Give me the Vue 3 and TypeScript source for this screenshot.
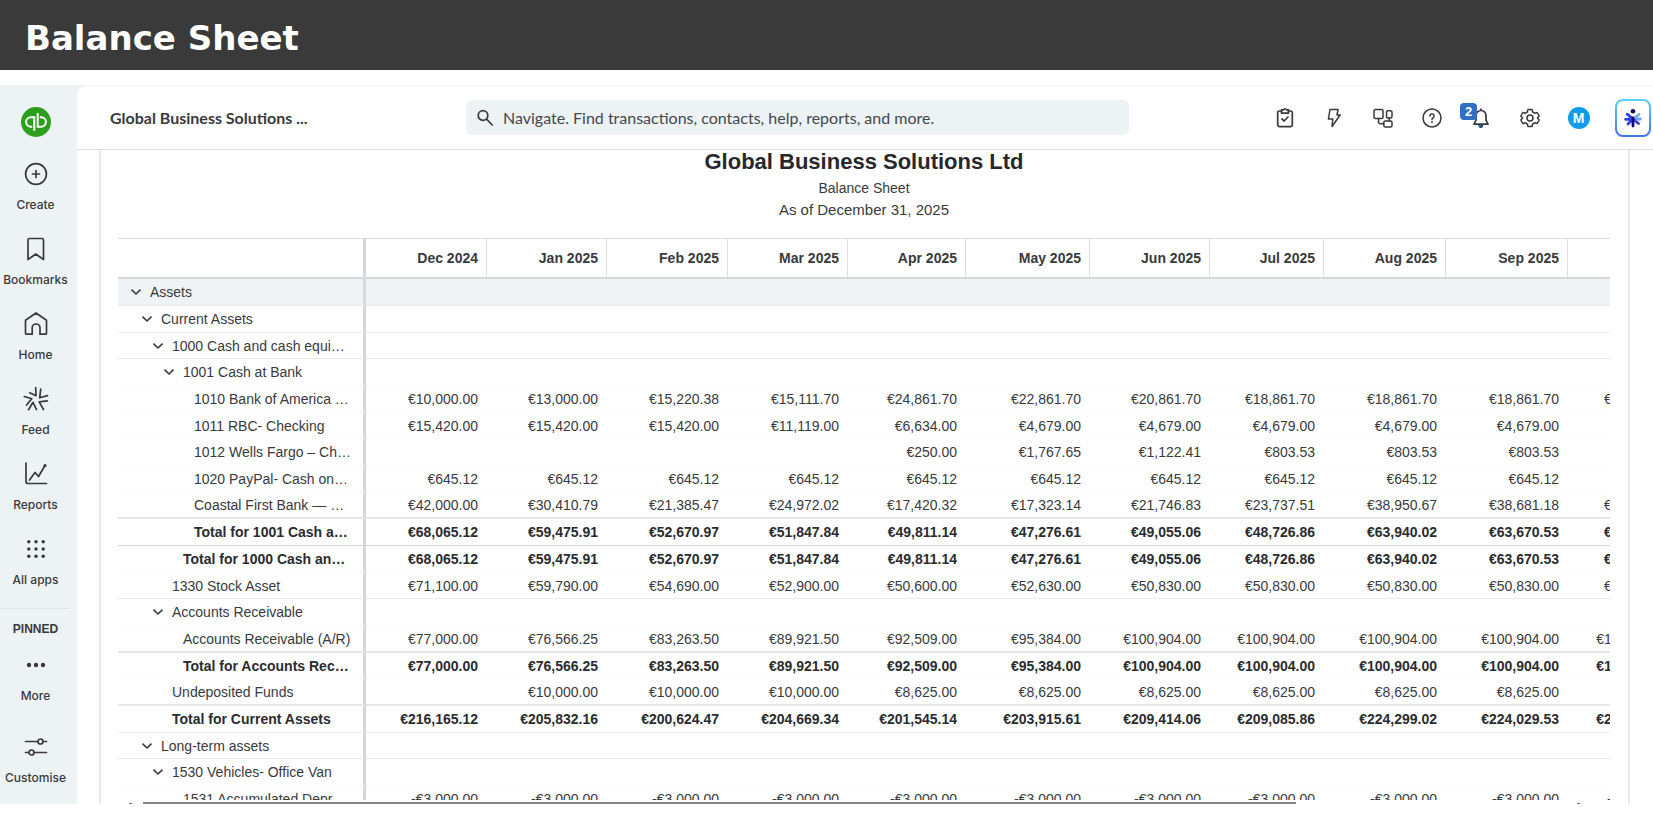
<script setup lang="ts">
import { ref } from 'vue'

type Kind = 'group' | 'leaf' | 'total'

interface Row {
  name: string
  level: number
  kind: Kind
  line: 'faint' | 'light' | 'medium' | 'strong'
  values: string[]
}

interface NavItem {
  id: string
  label: string
}

const query = ref('')

const navItems: NavItem[] = [
  { id: 'create', label: 'Create' },
  { id: 'bookmarks', label: 'Bookmarks' },
  { id: 'home', label: 'Home' },
  { id: 'feed', label: 'Feed' },
  { id: 'reports', label: 'Reports' },
  { id: 'apps', label: 'All apps' },
]

const months = [
  'Dec 2024', 'Jan 2025', 'Feb 2025', 'Mar 2025', 'Apr 2025', 'May 2025',
  'Jun 2025', 'Jul 2025', 'Aug 2025', 'Sep 2025',
]

const same = (value: string): string[] => [...months.map(() => value), value]
const blank = same('')

const cashTotals = [
  '€68,065.12', '€59,475.91', '€52,670.97', '€51,847.84', '€49,811.14', '€47,276.61',
  '€49,055.06', '€48,726.86', '€63,940.02', '€63,670.53', '€63,670.53',
]

const receivables = [
  '€77,000.00', '€76,566.25', '€83,263.50', '€89,921.50', '€92,509.00', '€95,384.00',
  '€100,904.00', '€100,904.00', '€100,904.00', '€100,904.00', '€100,904.00',
]

const rows: Row[] = [
  { name: 'Assets', level: 0, kind: 'group', line: 'light', values: blank },
  { name: 'Current Assets', level: 1, kind: 'group', line: 'light', values: blank },
  { name: '1000 Cash and cash equi…', level: 2, kind: 'group', line: 'light', values: blank },
  { name: '1001 Cash at Bank', level: 3, kind: 'group', line: 'faint', values: blank },
  {
    name: '1010 Bank of America …', level: 4, kind: 'leaf', line: 'faint',
    values: ['€10,000.00', '€13,000.00', '€15,220.38', '€15,111.70', '€24,861.70', '€22,861.70', '€20,861.70', '€18,861.70', '€18,861.70', '€18,861.70', '€18,861.70'],
  },
  {
    name: '1011 RBC- Checking', level: 4, kind: 'leaf', line: 'faint',
    values: ['€15,420.00', '€15,420.00', '€15,420.00', '€11,119.00', '€6,634.00', '€4,679.00', '€4,679.00', '€4,679.00', '€4,679.00', '€4,679.00', ''],
  },
  {
    name: '1012 Wells Fargo – Ch…', level: 4, kind: 'leaf', line: 'faint',
    values: ['', '', '', '', '€250.00', '€1,767.65', '€1,122.41', '€803.53', '€803.53', '€803.53', ''],
  },
  {
    name: '1020 PayPal- Cash on…', level: 4, kind: 'leaf', line: 'faint',
    values: [...months.map(() => '€645.12'), ''],
  },
  {
    name: 'Coastal First Bank — …', level: 4, kind: 'leaf', line: 'medium',
    values: ['€42,000.00', '€30,410.79', '€21,385.47', '€24,972.02', '€17,420.32', '€17,323.14', '€21,746.83', '€23,737.51', '€38,950.67', '€38,681.18', '€38,681.18'],
  },
  { name: 'Total for 1001 Cash a…', level: 4, kind: 'total', line: 'strong', values: cashTotals },
  { name: 'Total for 1000 Cash an…', level: 3, kind: 'total', line: 'faint', values: cashTotals },
  {
    name: '1330 Stock Asset', level: 2, kind: 'leaf', line: 'light',
    values: ['€71,100.00', '€59,790.00', '€54,690.00', '€52,900.00', '€50,600.00', '€52,630.00', '€50,830.00', '€50,830.00', '€50,830.00', '€50,830.00', '€50,830.00'],
  },
  { name: 'Accounts Receivable', level: 2, kind: 'group', line: 'faint', values: blank },
  { name: 'Accounts Receivable (A/R)', level: 3, kind: 'leaf', line: 'medium', values: receivables },
  { name: 'Total for Accounts Rec…', level: 3, kind: 'total', line: 'faint', values: receivables },
  {
    name: 'Undeposited Funds', level: 2, kind: 'leaf', line: 'medium',
    values: ['', '€10,000.00', '€10,000.00', '€10,000.00', '€8,625.00', '€8,625.00', '€8,625.00', '€8,625.00', '€8,625.00', '€8,625.00', ''],
  },
  {
    name: 'Total for Current Assets', level: 2, kind: 'total', line: 'light',
    values: ['€216,165.12', '€205,832.16', '€200,624.47', '€204,669.34', '€201,545.14', '€203,915.61', '€209,414.06', '€209,085.86', '€224,299.02', '€224,029.53', '€224,029.53'],
  },
  { name: 'Long-term assets', level: 1, kind: 'group', line: 'light', values: blank },
  { name: '1530 Vehicles- Office Van', level: 2, kind: 'group', line: 'faint', values: blank },
  { name: '1531 Accumulated Depr…', level: 3, kind: 'leaf', line: 'faint', values: same('-€3,000.00') },
]
</script>

<template>
  <div class="page">
    <header class="banner">
      <h1>Balance Sheet</h1>
    </header>

    <div class="app">
      <nav class="sidebar" aria-label="Main">
        <a class="logo" href="#" aria-label="QuickBooks">
          <svg viewBox="0 0 30 30" width="30" height="30">
            <circle cx="15" cy="15" r="15" fill="#2ca01c" />
            <g fill="none" stroke="#fff" stroke-width="2">
              <path d="M13.300 24V10.300H9.800a4.700 4.700 0 0 0 0 9.400h1.400" />
              <path d="M16.700 6v13.700h3.500a4.700 4.700 0 0 0 0-9.400h-1.400" />
            </g>
          </svg>
        </a>

        <ul class="nav-list">
          <li v-for="item in navItems" :key="item.id">
            <a class="nav-item" href="#">
              <svg class="icon" viewBox="0 0 28 28" width="28" height="28">
                <template v-if="item.id === 'create'">
                  <circle cx="14" cy="14" r="10.400" />
                  <path d="M14 10.500v7M10.500 14h7" />
                </template>
                <path v-else-if="item.id === 'bookmarks'" d="M7 3.500h13a1.500 1.500 0 0 1 1.500 1.500v19.500L13.800 19l-7.800 5.500V5A1.500 1.500 0 0 1 7.500 3.500Z" />
                <path v-else-if="item.id === 'home'" d="M3.500 10.200 14 3l10.500 7.200v13a1 1 0 0 1-1 1H18v-6.300a3.900 3.900 0 0 0-7.800 0v6.300H4.500a1 1 0 0 1-1-1Z" />
                <path v-else-if="item.id === 'feed'" d="M13.700 2.500 14 10.700 7.700 7.800M18.700 4.200 17.700 12.800 25.500 10.600M2.300 11.500 9.800 13.700 4.500 20M6.500 24.700 11 17.300 14.500 24.500M25.300 15.800 17.200 16.800 21.500 24.500" />
                <template v-else-if="item.id === 'reports'">
                  <path d="M4 3v18.500a2 2 0 0 0 2 2h18.500" />
                  <path d="M7.500 20 13 12.500l3.500 4L23 5.500" />
                  <circle class="solid" cx="23" cy="5.500" r="1.600" />
                </template>
                <g v-else class="solid">
                  <template v-for="y in 3" :key="y">
                    <circle v-for="x in 3" :key="x" :cx="x * 7.2 - 0.4" :cy="y * 7.2 - 0.4" r="1.700" />
                  </template>
                </g>
              </svg>
              <span>{{ item.label }}</span>
            </a>
          </li>
        </ul>

        <div class="pinned">
          <h2>PINNED</h2>
          <button type="button" class="nav-item">
            <svg class="icon" viewBox="0 0 28 28" width="28" height="28">
              <g class="solid">
                <circle cx="7" cy="14" r="2.200" />
                <circle cx="14" cy="14" r="2.200" />
                <circle cx="21" cy="14" r="2.200" />
              </g>
            </svg>
            <span>More</span>
          </button>
          <button type="button" class="nav-item">
            <svg class="icon" viewBox="0 0 28 28" width="28" height="28">
              <path d="M3.500 8.500h12M21.500 8.500h3M3.500 19.500h3M12.500 19.500h12" />
              <circle cx="18.500" cy="8.500" r="2.500" />
              <circle cx="9.500" cy="19.500" r="2.500" />
            </svg>
            <span>Customise</span>
          </button>
        </div>
      </nav>

      <main class="main">
        <div class="topbar">
          <button type="button" class="company">Global Business Solutions ...</button>
          <label class="search">
            <svg class="icon" viewBox="0 0 18 18" width="18" height="18">
              <circle cx="7" cy="6.500" r="4.800" />
              <path d="m10.600 10.200 5.600 5.800" />
            </svg>
            <input v-model="query" type="text" aria-label="Search" placeholder="Navigate. Find transactions, contacts, help, reports, and more.">
          </label>
          <div class="tools">
            <button type="button" class="tool" aria-label="Tasks">
              <svg class="icon" viewBox="0 0 24 24" width="24" height="24">
                <path d="M8.500 5h-2A1.800 1.800 0 0 0 4.700 6.800v12a1.800 1.800 0 0 0 1.800 1.800h11a1.800 1.800 0 0 0 1.800-1.800v-12A1.800 1.800 0 0 0 17.500 5h-2" />
                <path d="M8.500 3.800h2a1.600 1.600 0 0 1 3 0h2v3.400h-7ZM9 13l2.200 2 3.800-4" />
              </svg>
            </button>
            <button type="button" class="tool" aria-label="Quick actions">
              <svg class="icon thin" viewBox="0 0 24 24" width="24" height="24">
                <path d="M8 3.500h8L15 9h3.200L10 20.500l.8-7.500H6.400Z" />
              </svg>
            </button>
            <button type="button" class="tool" aria-label="Workflows">
              <svg class="icon thin" viewBox="0 0 24 24" width="24" height="24">
                <rect x="3" y="3.500" width="9" height="9" rx="1.500" />
                <rect x="15.500" y="4.800" width="5.500" height="7.200" rx="1.500" />
                <rect x="12.800" y="15" width="8.200" height="6" rx="1.500" />
                <path d="M7.500 12.500V16A1.800 1.800 0 0 0 9.300 17.800h3.500M18.200 12v3" />
              </svg>
            </button>
            <button type="button" class="tool" aria-label="Help">
              <svg class="icon thin" viewBox="0 0 24 24" width="24" height="24">
                <circle cx="12" cy="12" r="9" />
                <path d="M9.900 10a2.100 2.100 0 1 1 3.200 1.800c-.8.500-1.100.9-1.100 1.700M12 15.600v.8" />
              </svg>
            </button>
            <button type="button" class="tool" aria-label="Notifications">
              <svg class="icon" viewBox="0 0 24 24" width="24" height="24">
                <path d="M12 3v1.500M12 4.500a5 5 0 0 0-5 5v4.700l-2 4h14l-2-4V9.500a5 5 0 0 0-5-5Z" />
                <path class="clapper" d="M10 19.500h4l-1 2h-2Z" />
              </svg>
              <span class="badge">2</span>
            </button>
            <button type="button" class="tool" aria-label="Settings">
              <svg class="icon thin" viewBox="0 0 24 24" width="24" height="24">
                <path d="M10 3.500h4l.7 2.500 2 1.200 2.500-.7 2 3.500-1.800 2 1.800 2-2 3.500-2.500-.7-2 1.200-.7 2.500h-4l-.7-2.500-2-1.200-2.500.7-2-3.500 1.800-2-1.800-2 2-3.500 2.500.7 2-1.200Z" />
                <circle cx="12" cy="12" r="3" />
              </svg>
            </button>
            <button type="button" class="tool" aria-label="Account">
              <span class="avatar">M</span>
            </button>
            <button type="button" class="assistant" aria-label="Assistant">
              <svg viewBox="0 0 20 20" width="20" height="20">
                <g fill="none" stroke-width="2.800" stroke-linecap="round">
                  <path d="m10 11 6-4.500M10 11h7.500" stroke="#7ba6f8" />
                  <path d="m4.200 6.200 5.800 4.800-7.500.3M10 11l-5 5M10 11l5.500 4.500" stroke="#2c43e4" />
                  <path d="M10 10v8" stroke="#140a78" />
                </g>
                <circle cx="10" cy="3.200" r="2.300" fill="#140a60" />
              </svg>
            </button>
          </div>
        </div>

        <section class="report">
          <div class="heading">
            <h2>Global Business Solutions Ltd</h2>
            <p>Balance Sheet</p>
            <p class="date">As of December 31, 2025</p>
          </div>

          <div class="viewport">
            <table>
              <colgroup>
                <col class="c-name">
                <col v-for="n in 11" :key="n" :class="'c-' + n">
              </colgroup>
              <thead>
                <tr>
                  <td class="name" />
                  <th v-for="month in months" :key="month" scope="col">{{ month }}</th>
                  <td />
                </tr>
              </thead>
              <tbody>
                <tr v-for="row in rows" :key="row.name" :class="[row.kind, 'line-' + row.line, 'level-' + row.level]">
                  <th class="name" scope="row">
                    <div class="label">
                      <button v-if="row.kind === 'group'" type="button" aria-expanded="true" :aria-label="'Collapse ' + row.name">
                        <svg viewBox="0 0 14 14" width="14" height="14">
                          <path d="m2.500 4.700 4.500 4.300 4.500-4.300" />
                        </svg>
                      </button>
                      <span>{{ row.name }}</span>
                    </div>
                  </th>
                  <td v-for="(value, i) in row.values" :key="i">{{ value }}</td>
                </tr>
              </tbody>
            </table>
          </div>
          <div class="scrollbar"><span class="arrow" /><div class="track"><div class="thumb" /></div><span class="arrow" /></div>
        </section>
      </main>
    </div>
  </div>
</template>

<style>
body {
  margin: 0;
  background: #fff;
}
</style>

<style scoped>
* {
  box-sizing: border-box;
}

h1,
h2,
p,
ul {
  margin: 0;
  padding: 0;
}

button {
  padding: 0;
  border: 0;
  background: none;
  color: inherit;
  font: inherit;
}

a {
  color: inherit;
  text-decoration: none;
}

svg {
  display: block;
}

.page {
  display: flex;
  flex-direction: column;
  height: 100vh;
  padding-bottom: 15px;
  color: #393a3d;
  font-family: "Liberation Sans", Arial, sans-serif;
  font-size: 14px;
}

.banner {
  display: flex;
  flex: none;
  align-items: center;
  height: 70px;
  margin-bottom: 15px;
  padding: 5px 25px 0;
  background: #3a3a3a;
}

.banner h1 {
  color: #fff;
  font: bold 34px/40px "DejaVu Sans", sans-serif;
}

.app {
  display: flex;
  flex: 1;
  min-height: 0;
  background: #edf2f5;
}

.icon {
  fill: none;
  stroke: #393a3d;
  stroke-width: 1.700;
  stroke-linecap: round;
  stroke-linejoin: round;
}

.icon.thin {
  stroke-width: 1.500;
}

.icon .solid {
  fill: #393a3d;
  stroke: none;
}

.sidebar {
  flex: none;
  width: 77px;
  padding: 22px 6px 0 0;
  font: 500 12px/16px Inter, sans-serif;
}

.logo {
  display: block;
  width: 30px;
  margin: 0 auto 23px;
}

.nav-list {
  display: grid;
  gap: 22px;
  list-style: none;
}

.nav-item {
  display: grid;
  gap: 9px;
  justify-items: center;
  width: 100%;
}

.pinned {
  margin-top: 20px;
  border-top: 1px solid #e0e5e8;
}

.pinned h2 {
  margin: 12px 0 14px;
  font: bold 12px/16px "Liberation Sans", Arial, sans-serif;
  text-align: center;
}

.pinned .nav-item + .nav-item {
  margin-top: 29px;
}

.main {
  display: flex;
  flex: 1;
  flex-direction: column;
  min-width: 0;
  border-top: 1px solid #f3f5f6;
  border-radius: 10px 0 0 0;
  background: #fff;
}

.topbar {
  display: flex;
  flex: none;
  align-items: center;
  height: 64px;
  padding: 0 2px 0 33px;
  border-bottom: 1px solid #dcdfe2;
}

.company {
  flex: 0 0 356px;
  font: bold 16px/20px Lato, sans-serif;
  text-align: left;
}

.search {
  display: flex;
  flex: 0 1 43%;
  align-items: center;
  gap: 9px;
  height: 35px;
  padding: 0 10px;
  border-radius: 6px;
  background: #edf2f5;
}

.search input {
  flex: 1;
  min-width: 0;
  padding: 0;
  border: 0;
  outline: 0;
  background: none;
  color: #393a3d;
  font: 16px/20px Lato, sans-serif;
}

.search input::placeholder {
  color: #44484c;
  opacity: 1;
}

.tools {
  display: flex;
  align-items: center;
  margin-left: auto;
}

.tool {
  position: relative;
  display: grid;
  place-items: center;
  width: 49px;
  height: 36px;
}

.clapper {
  fill: #26558f;
  stroke: #26558f;
  stroke-width: 1;
}

.badge {
  position: absolute;
  top: 3px;
  left: 4px;
  width: 17px;
  border-radius: 4px;
  background: #2f6fc4;
  color: #fff;
  font: bold 13px/17px "Liberation Sans", Arial, sans-serif;
}

.avatar {
  width: 22px;
  border-radius: 50%;
  background: #0d9bea;
  color: #fff;
  font: bold 14px/22px "Liberation Sans", Arial, sans-serif;
}

.assistant {
  display: grid;
  place-items: center;
  width: 36px;
  height: 38px;
  margin-left: 12px;
  border: 2px solid transparent;
  border-radius: 8px;
  background:
    linear-gradient(#fff, #fff) padding-box,
    linear-gradient(#5bd3f2, #3f74f0) border-box;
}

.report {
  display: flex;
  flex: 1;
  flex-direction: column;
  min-height: 0;
  margin: 0 23px 0 22px;
  padding: 0 18px 0 17px;
  border: solid #e6e9eb;
  border-width: 0 2px;
}

.heading {
  padding-bottom: 17px;
  line-height: 22px;
  text-align: center;
}

.heading h2 {
  margin-bottom: 3px;
  color: #26282b;
  font-size: 22px;
  line-height: 24px;
}

.heading .date {
  font-size: 15px;
}

.viewport {
  flex: 1;
  min-height: 0;
  overflow: hidden;
}

table {
  width: 1565px;
  border-spacing: 0;
  table-layout: fixed;
}

.c-name { width: 248px; }
.c-1 { width: 121px; }
.c-2 { width: 120px; }
.c-3 { width: 121px; }
.c-4, .c-7 { width: 120px; }
.c-5 { width: 118px; }
.c-6 { width: 124px; }
.c-8 { width: 114px; }
.c-9, .c-10 { width: 122px; }
.c-11 { width: 115px; }

thead tr {
  height: 41px;
}

tbody tr {
  height: 27px;
}

tbody tr:nth-child(3n) {
  height: 26px;
}

th,
td {
  padding: 0 9px 0 0;
  border-bottom: 1px solid #fafafa;
  line-height: 20px;
  text-align: right;
  white-space: nowrap;
}

thead th,
thead td {
  border-top: 1px solid #dcdfe1;
  border-bottom: 2px solid #d3d8db;
}

thead th {
  padding-right: 8px;
  border-right: 1px solid #dcdfe1;
}

tbody th {
  font-weight: normal;
}

th.name,
td.name {
  padding: 0;
  border-right: 3px solid #d4d7db;
  text-align: left;
}

.label {
  display: flex;
  align-items: center;
  gap: 7px;
  overflow: hidden;
}

.level-0 .label { padding-left: 11px; }
.level-1 .label { padding-left: 22px; }
.level-2 .label { padding-left: 33px; }
.level-3 .label { padding-left: 44px; }
.level-4 .label { padding-left: 55px; }

tr:not(.group) .label::before {
  flex: none;
  width: 14px;
  content: "";
}

.label path {
  fill: none;
  stroke: #393a3d;
  stroke-width: 1.600;
}

.total th,
.total td {
  color: #2b2c2f;
  font-weight: bold;
}

.level-0 th,
.level-0 td {
  background: #eff3f6;
}

.line-light > * { border-bottom-color: #e9ebec; }
.line-medium > * { border-bottom: 2px solid #e6e7e8; }
.line-strong > * { border-bottom-color: #d2d4d5; }

.scrollbar {
  display: flex;
  flex: none;
  align-items: flex-end;
  gap: 11px;
  height: 4px;
  padding: 0 30px 0 11px;
}

.arrow {
  width: 3px;
  height: 1px;
  background: #777;
}

.track {
  flex: 1;
}

.thumb {
  width: 81%;
  height: 2px;
  background: #858585;
}
</style>
